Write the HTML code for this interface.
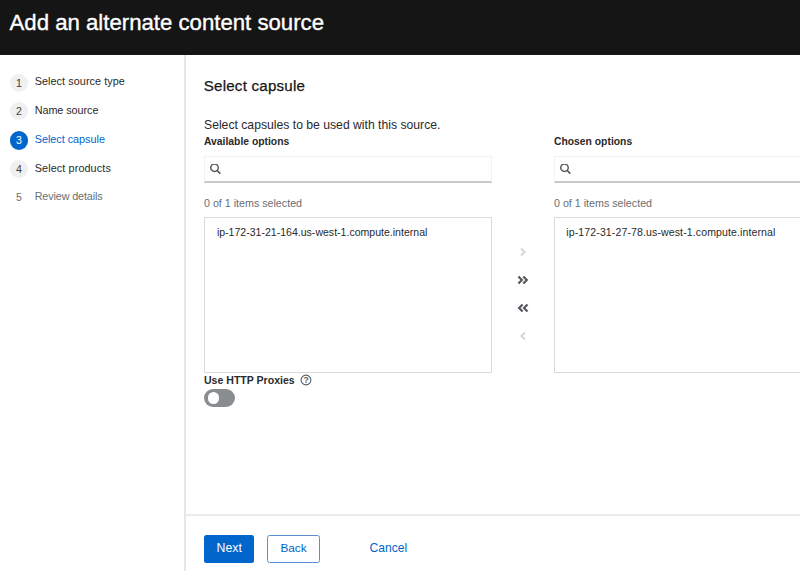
<!DOCTYPE html>
<html><head><meta charset="utf-8">
<style>
*{margin:0;padding:0;box-sizing:border-box}
html,body{width:800px;height:571px;overflow:hidden;background:#fff;font-family:"Liberation Sans",sans-serif;color:#151515}
.a{position:absolute;white-space:nowrap;line-height:1}
#hdr{position:absolute;left:0;top:0;width:800px;height:54.5px;background:#151515}
#side{position:absolute;left:184px;top:55px;width:1.5px;height:516px;background:#e6e6e6}
.circ{position:absolute;width:18.5px;height:18.5px;border-radius:50%;background:#f0f0f0;color:#3c3f42;font-size:10.6px;line-height:18.5px;text-align:center}
.step{position:absolute;left:34.7px;font-size:10.8px;line-height:1;white-space:nowrap;color:#2a2a2a}
.inp{position:absolute;height:26.5px;border:1px solid #f2f2f2;border-bottom:2px solid #c6c8ca}
.box{position:absolute;border:1px solid #dadada}
.lbl{font-weight:700;font-size:10.35px;color:#2a2a2a}
.cnt{font-size:10.7px;color:#6a6e73}
.item{font-size:10.55px;color:#2a2a2a}
</style></head><body>
<div id="hdr"></div>
<div class="a" style="left:9.5px;top:12.2px;font-size:22.2px;color:#fff;-webkit-text-stroke:0.35px #fff">Add an alternate content source</div>
<div id="side"></div>

<div class="circ" style="left:9.8px;top:73.6px">1</div>
<div class="step" style="top:76.1px;letter-spacing:0.08px">Select source type</div>
<div class="circ" style="left:9.8px;top:101.8px">2</div>
<div class="step" style="top:104.6px;letter-spacing:-0.05px">Name source</div>
<div class="circ" style="left:9.8px;top:131px;background:#0066cc;color:#fff">3</div>
<div class="step" style="top:133.5px;color:#0066cc">Select capsule</div>
<div class="circ" style="left:9.8px;top:159.8px">4</div>
<div class="step" style="top:162.7px;letter-spacing:0.12px">Select products</div>
<div class="circ" style="left:9.8px;top:188px;background:transparent;color:#6a6e73">5</div>
<div class="step" style="top:190.9px;color:#6a6e73;letter-spacing:-0.13px">Review details</div>

<div class="a" style="left:203.7px;top:78.4px;font-size:15.1px;letter-spacing:0.24px;color:#151515;-webkit-text-stroke:0.25px #151515">Select capsule</div>
<div class="a" style="left:204px;top:118.9px;font-size:12.2px;color:#2a2a2a">Select capsules to be used with this source.</div>

<div class="a lbl" style="left:204px;top:137.4px">Available options</div>
<div class="inp" style="left:204px;top:156px;width:288px"></div>
<svg class="a" style="left:209.5px;top:163.5px" width="12" height="12" viewBox="0 0 12 12"><circle cx="4.5" cy="3.7" r="3.75" fill="none" stroke="#55585c" stroke-width="1.45"/><line x1="7.2" y1="6.5" x2="9.8" y2="9.2" stroke="#55585c" stroke-width="1.7" stroke-linecap="round"/></svg>
<div class="a cnt" style="left:204px;top:197.5px">0 of 1 items selected</div>
<div class="box" style="left:204px;top:217px;width:288px;height:155.5px"></div>
<div class="a item" style="left:216.9px;top:226.8px">ip-172-31-21-164.us-west-1.compute.internal</div>

<div class="a lbl" style="left:554px;top:137.4px">Chosen options</div>
<div class="inp" style="left:554px;top:156px;width:300px"></div>
<svg class="a" style="left:559.5px;top:163.5px" width="12" height="12" viewBox="0 0 12 12"><circle cx="4.5" cy="3.7" r="3.75" fill="none" stroke="#55585c" stroke-width="1.45"/><line x1="7.2" y1="6.5" x2="9.8" y2="9.2" stroke="#55585c" stroke-width="1.7" stroke-linecap="round"/></svg>
<div class="a cnt" style="left:554px;top:197.5px">0 of 1 items selected</div>
<div class="box" style="left:554px;top:217px;width:300px;height:155.5px"></div>
<div class="a item" style="left:566.3px;top:226.8px;letter-spacing:0.11px">ip-172-31-27-78.us-west-1.compute.internal</div>

<!-- transfer controls -->
<svg class="a" style="left:515px;top:244px" width="16" height="100" viewBox="0 0 16 100">
 <polyline points="6,4.6 9.6,8 6,11.4" fill="none" stroke="#d6d6d6" stroke-width="2"/>
 <polyline points="3.4,32.5 6.9,36 3.4,39.5" fill="none" stroke="#56595d" stroke-width="2.2"/>
 <polyline points="8.3,32.5 11.8,36 8.3,39.5" fill="none" stroke="#56595d" stroke-width="2.2"/>
 <polyline points="7.6,60.5 4.1,64 7.6,67.5" fill="none" stroke="#56595d" stroke-width="2.2"/>
 <polyline points="12.5,60.5 9,64 12.5,67.5" fill="none" stroke="#56595d" stroke-width="2.2"/>
 <polyline points="10,88.6 6.4,92 10,95.4" fill="none" stroke="#d6d6d6" stroke-width="2"/>
</svg>

<div class="a lbl" style="left:204px;top:374.9px;font-size:10.55px">Use HTTP Proxies</div>
<svg class="a" style="left:300px;top:374px" width="12" height="12" viewBox="0 0 12 12"><circle cx="6" cy="6" r="4.9" fill="none" stroke="#5a5d61" stroke-width="1.1"/><text x="6.1" y="9.1" font-size="8.6" font-family="Liberation Sans" font-weight="700" text-anchor="middle" fill="#5a5d61">?</text></svg>
<div class="a" style="left:204.2px;top:388.6px;width:30.7px;height:18.4px;border-radius:9.2px;background:#8a8d90"></div>
<div class="a" style="left:207.6px;top:392.2px;width:11.6px;height:11.6px;border-radius:50%;background:#fff"></div>

<div class="a" style="left:185.5px;top:514.3px;width:615px;height:1.5px;background:#ebebeb"></div>
<div class="a" style="left:204px;top:534.5px;width:50.3px;height:28px;border-radius:2.5px;background:#0066cc"></div>
<div class="a" style="left:216.6px;top:542.3px;font-size:12.3px;color:#fff">Next</div>
<div class="a" style="left:267.2px;top:534.5px;width:52.6px;height:28px;border-radius:2.5px;border:1px solid #5b8fd2"></div>
<div class="a" style="left:280.4px;top:542.8px;font-size:11.8px;color:#0066cc">Back</div>
<div class="a" style="left:369.5px;top:542.4px;font-size:12.1px;color:#0066cc">Cancel</div>
</body></html>
